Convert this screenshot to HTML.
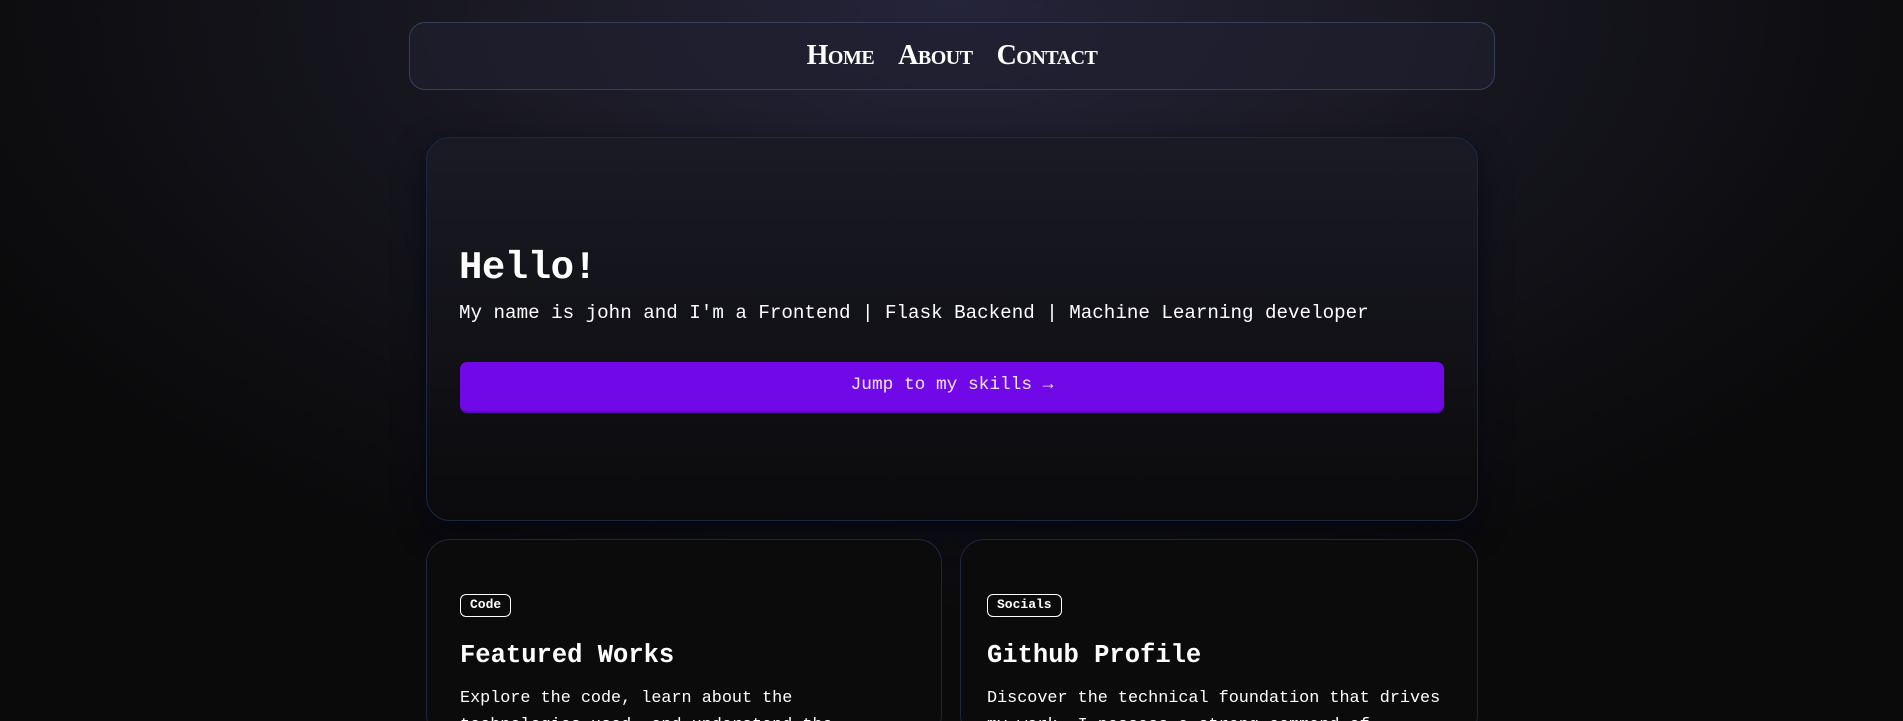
<!DOCTYPE html>
<html><head><meta charset="utf-8"><style>
*{margin:0;padding:0;box-sizing:border-box}
html,body{width:1903px;height:721px;overflow:hidden}
body{background:radial-gradient(ellipse 1100px 620px at 951px 0px,#25243a 0%,#1c1b27 35%,#121218 65%,#0a0a0b 100%);font-family:"Liberation Mono",monospace;color:#fff;position:relative}
.nav{position:absolute;left:409px;top:22px;width:1086px;height:68px;border:1px solid #34405a;border-radius:16px;background:rgba(32,32,48,.6);display:flex;justify-content:center;align-items:center;gap:24px;font-family:"Liberation Serif",serif;font-weight:bold;font-variant:small-caps;font-size:28px;letter-spacing:-0.5px}
.hero{position:absolute;left:426px;top:137px;width:1052px;height:384px;border:1px solid #1e2740;border-radius:24px;background:linear-gradient(180deg,#1a1a24 0%,#121218 50%,#0b0b0d 100%);box-shadow:0 10px 30px rgba(0,0,20,.6)}
.hero h1{position:absolute;left:32px;top:108px;font-size:39px;font-weight:bold;letter-spacing:-0.5px}
.hero p{position:absolute;left:32px;top:164px;font-size:19.2px}
.btn{position:absolute;left:33px;top:224px;width:984px;height:49px;background:#7008e8;border-radius:7px;box-shadow:0 2px 0 #5a0bb8;display:flex;justify-content:center;align-items:center;font-size:17.8px;color:#f0e8ff;padding-bottom:3px}
.card{position:absolute;top:539px;height:200px;border:1px solid #1e2740;border-radius:24px;background:#0b0b0c}
.tag{position:absolute;top:54px;height:23px;border:1.5px solid #fff;border-radius:6px;font-size:13px;font-weight:bold;padding:0 9px;line-height:20px}
.card h2{position:absolute;top:101px;font-size:25.5px;font-weight:bold}
.card p{position:absolute;top:145px;font-size:16.8px;line-height:27px;width:470px}
</style></head><body>
<div class="nav"><span>Home</span><span>About</span><span>Contact</span></div>
<div class="hero">
<h1>Hello!</h1>
<p>My name is john and I'm a Frontend | Flask Backend | Machine Learning developer</p>
<div class="btn">Jump to my skills →</div>
</div>
<div class="card" style="left:426px;width:516px">
<div class="tag" style="left:33px">Code</div>
<h2 style="left:33px">Featured Works</h2>
<p style="left:33px;width:380px">Explore the code, learn about the technologies used, and understand the</p>
</div>
<div class="card" style="left:960px;width:518px">
<div class="tag" style="left:26px">Socials</div>
<h2 style="left:26px">Github Profile</h2>
<p style="left:26px">Discover the technical foundation that drives my work. I possess a strong command of</p>
</div>
</body></html>
